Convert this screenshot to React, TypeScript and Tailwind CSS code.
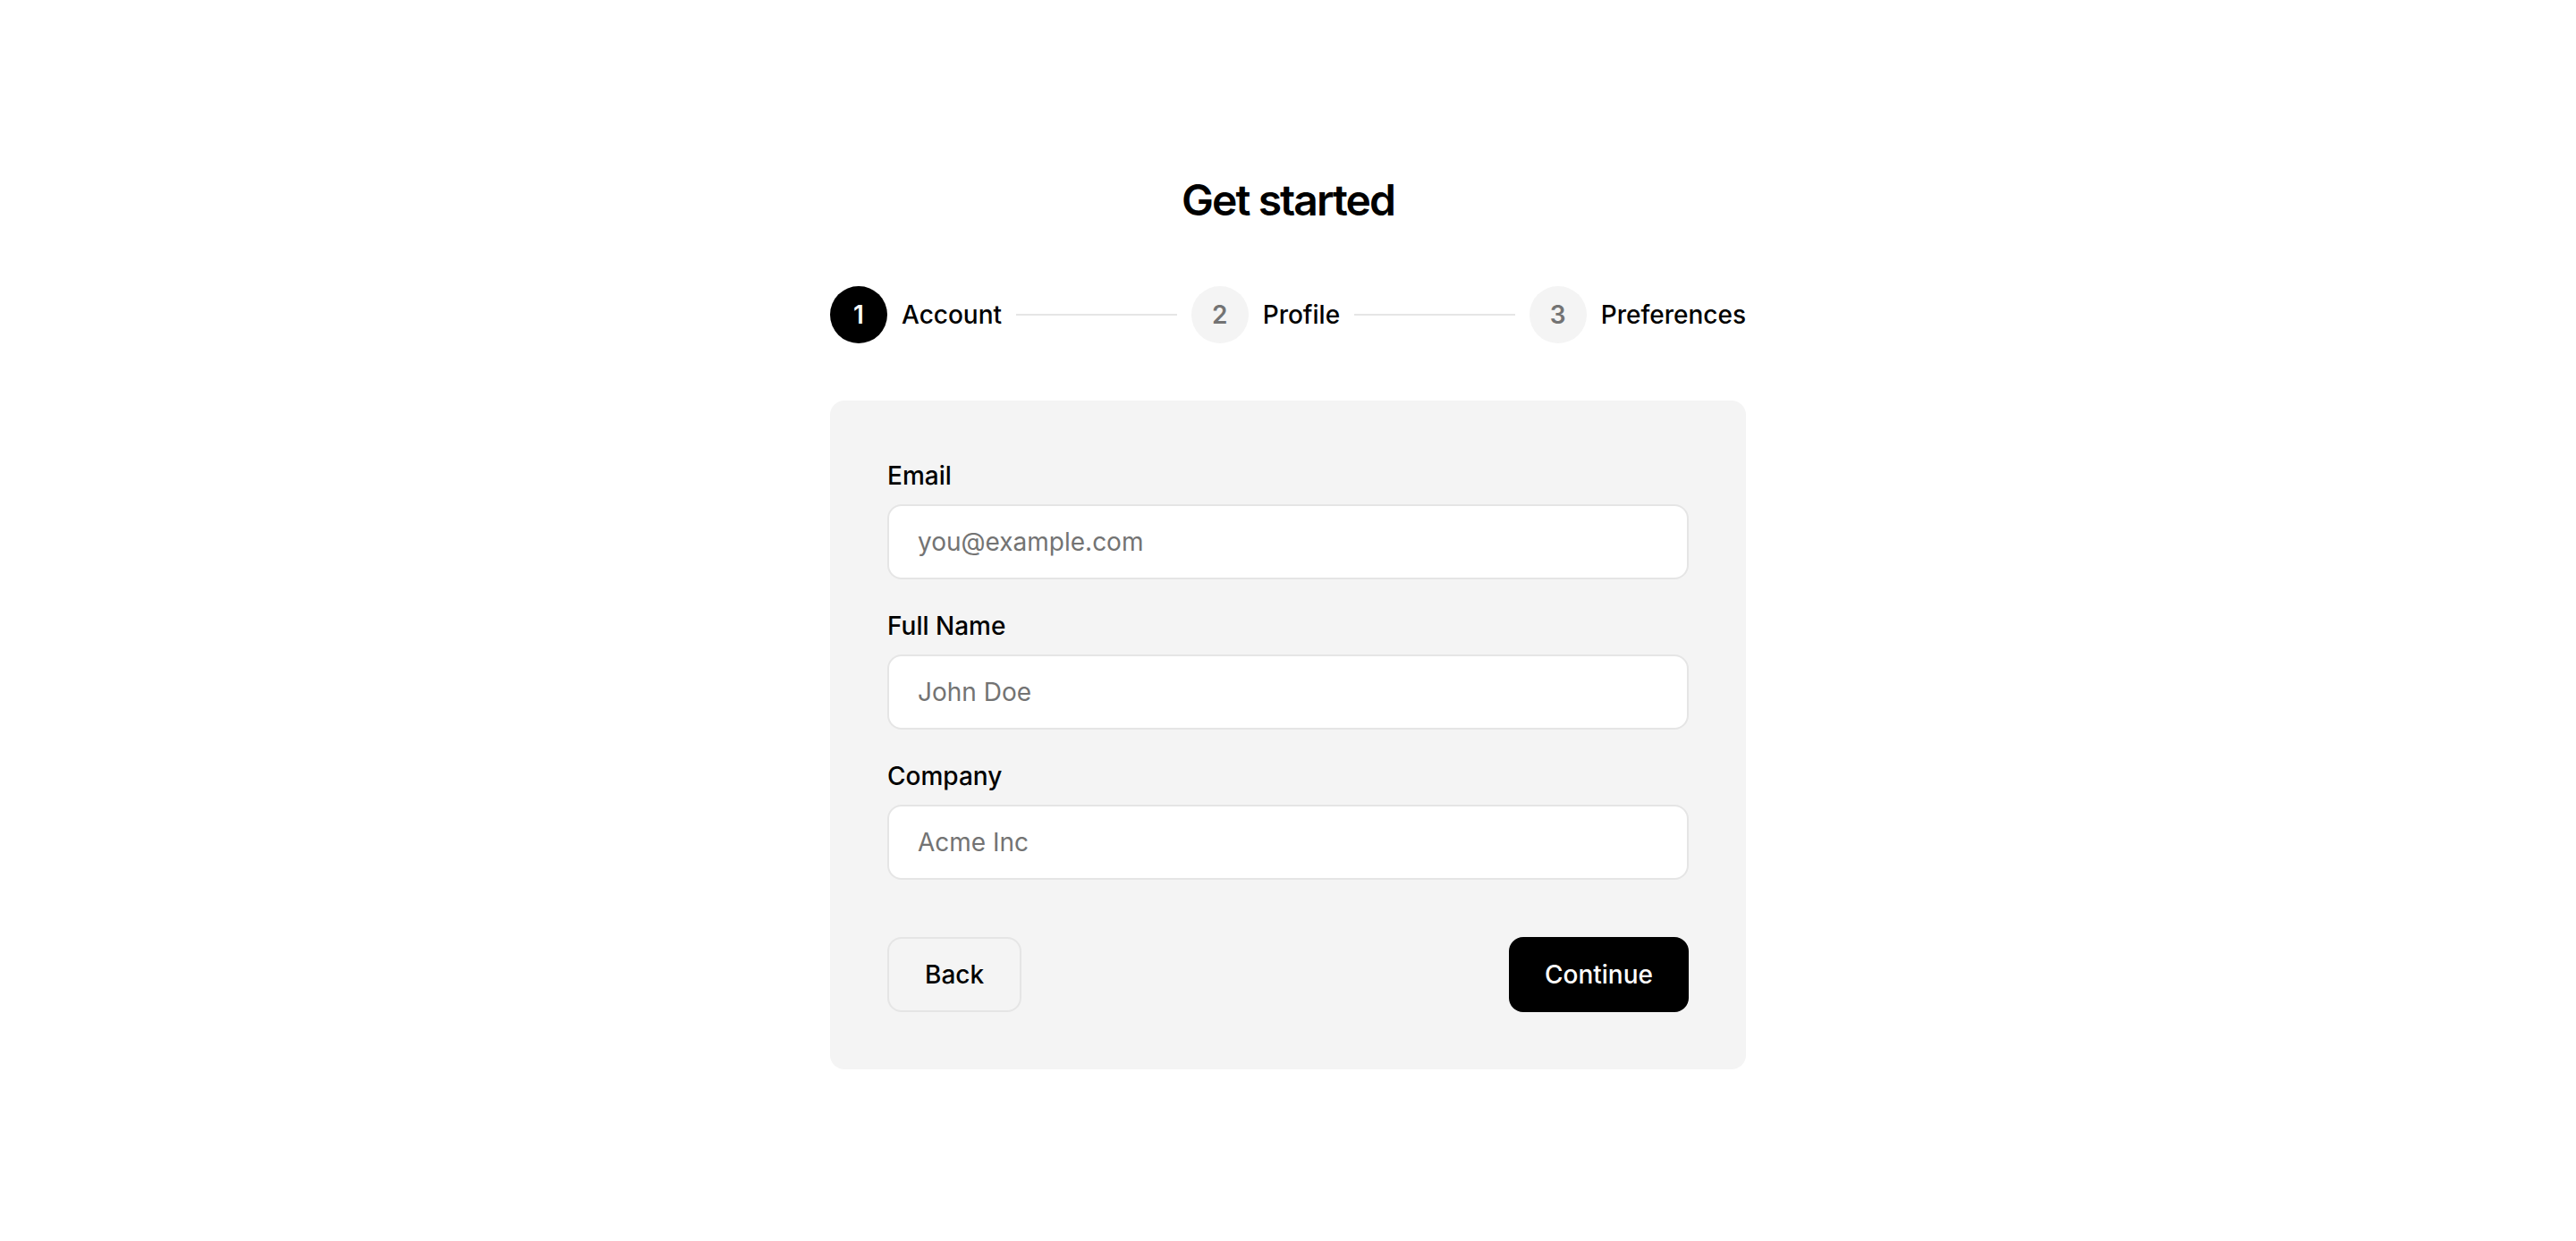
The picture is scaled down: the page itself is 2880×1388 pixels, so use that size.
import React from "react";

function Step({ n, label, active }: { n: number; label: string; active?: boolean }) {
  return (
    <div className="flex items-center gap-4 shrink-0">
      <div
        className={
          active
            ? "w-16 h-16 rounded-full bg-black text-white flex items-center justify-center text-[28px] font-semibold"
            : "w-16 h-16 rounded-full bg-[#f4f4f4] text-[#737373] flex items-center justify-center text-[28px] font-semibold"
        }
      >
        {n}
      </div>
      <span className="text-[28px] leading-[40px] font-medium text-black">{label}</span>
    </div>
  );
}

function Field({ label, placeholder, type }: { label: string; placeholder: string; type?: string }) {
  return (
    <div className="flex flex-col">
      <label className="text-[28px] leading-[40px] font-medium text-black mb-3">{label}</label>
      <input
        type={type ?? "text"}
        placeholder={placeholder}
        className="h-[84px] w-full rounded-2xl border-2 border-[#e5e5e5] bg-white px-8 text-[28px] text-black placeholder:text-[#737373] outline-none"
      />
    </div>
  );
}

export default function App() {
  return (
    <div
      className="min-h-screen w-full bg-white flex items-center justify-center"
      style={{ fontFamily: "Inter, 'Noto Sans', sans-serif" }}
    >
      <div className="w-[1024px] flex flex-col">
        <h1 className="text-center text-[48px] leading-[64px] font-semibold tracking-[-0.04em] text-black mb-16">
          Get started
        </h1>
        <div className="flex items-center gap-4 mb-16">
          <Step n={1} label="Account" active />
          <div className="flex-1 h-[2px] bg-[#e5e5e5]" />
          <Step n={2} label="Profile" />
          <div className="flex-1 h-[2px] bg-[#e5e5e5]" />
          <Step n={3} label="Preferences" />
        </div>
        <div className="rounded-2xl bg-[#f4f4f4] p-16">
          <div className="flex flex-col gap-8">
            <Field label="Email" placeholder="you@example.com" type="email" />
            <Field label="Full Name" placeholder="John Doe" />
            <Field label="Company" placeholder="Acme Inc" />
          </div>
          <div className="flex items-center justify-between mt-16">
            <button className="h-[84px] px-10 rounded-2xl border-2 border-[#e5e5e5] bg-[#f4f4f4] text-[28px] font-medium text-black">
              Back
            </button>
            <button className="h-[84px] px-10 rounded-2xl bg-black text-[28px] font-medium text-white">
              Continue
            </button>
          </div>
        </div>
      </div>
    </div>
  );
}
